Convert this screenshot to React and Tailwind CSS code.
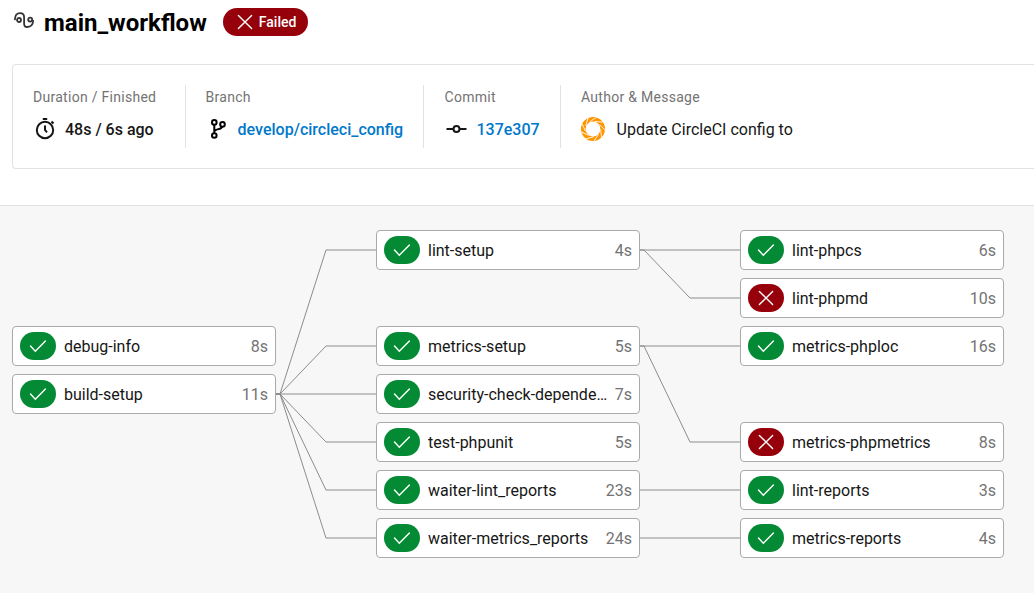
const SUCCESS = "success";
const FAILED = "failed";

const columns = [
  [
    { row: 2, name: "debug-info", time: "8s", status: SUCCESS },
    { row: 3, name: "build-setup", time: "11s", status: SUCCESS },
  ],
  [
    { row: 0, name: "lint-setup", time: "4s", status: SUCCESS },
    { row: 2, name: "metrics-setup", time: "5s", status: SUCCESS },
    { row: 3, name: "security-check-depende…", time: "7s", status: SUCCESS },
    { row: 4, name: "test-phpunit", time: "5s", status: SUCCESS },
    { row: 5, name: "waiter-lint_reports", time: "23s", status: SUCCESS },
    { row: 6, name: "waiter-metrics_reports", time: "24s", status: SUCCESS },
  ],
  [
    { row: 0, name: "lint-phpcs", time: "6s", status: SUCCESS },
    { row: 1, name: "lint-phpmd", time: "10s", status: FAILED },
    { row: 2, name: "metrics-phploc", time: "16s", status: SUCCESS },
    { row: 4, name: "metrics-phpmetrics", time: "8s", status: FAILED },
    { row: 5, name: "lint-reports", time: "3s", status: SUCCESS },
    { row: 6, name: "metrics-reports", time: "4s", status: SUCCESS },
  ],
];

const firstLinks = [[3, 0], [3, 2], [3, 3], [3, 4], [3, 5], [3, 6]];
const secondLinks = [[0, 0], [0, 1], [2, 2], [2, 4], [5, 5], [6, 6]];

const rowStart = ["row-start-1", "row-start-2", "row-start-3", "row-start-4", "row-start-5", "row-start-6", "row-start-7"];

function StatusGlyph({ status }) {
  return (
    <svg width="18" height="18" viewBox="0 0 18 18" fill="none" stroke="#fff" strokeWidth="1.4" strokeLinecap="round">
      <path d={status === SUCCESS ? "M1.5 9 6.3 14.2 16.4 4" : "M2.4 2.4 15.6 15.6M15.6 2.4 2.4 15.6"} />
    </svg>
  );
}

function Job({ job }) {
  return (
    <div className={`flex h-10 items-center rounded-[4px] border border-[#aaaaaa] bg-white px-[7px] ${rowStart[job.row]}`}>
      <span className={`flex h-7 w-9 shrink-0 items-center justify-center rounded-[14px] ${job.status === SUCCESS ? "bg-[#048a34]" : "bg-[#96000a]"}`}>
        <StatusGlyph status={job.status} />
      </span>
      <span className="ml-2 min-w-0 flex-1 truncate pt-[2px] text-[16px] leading-6 text-[#161616]">{job.name}</span>
      <span className="ml-1 pt-[2px] text-[16px] leading-6 text-[#737373]">{job.time}</span>
    </div>
  );
}

function JobColumn({ jobs }) {
  return (
    <div className="grid w-[264px] shrink-0 grid-cols-1 grid-rows-[repeat(7,40px)] gap-y-2">
      {jobs.map((job) => (
        <Job key={job.name} job={job} />
      ))}
    </div>
  );
}

function Links({ links }) {
  const y = (row) => row * 48 + 20;
  return (
    <svg className="shrink-0" width="100" height="328" fill="none" stroke="#8c8c8c" strokeWidth="1">
      {links.map(([from, to]) => (
        <path key={`${from}-${to}`} d={`M0 ${y(from)}H4L${from === to ? 4 : 50} ${y(to)}H100`} />
      ))}
    </svg>
  );
}

function Detail({ label, className, children }) {
  return (
    <div className={`flex h-[63px] shrink-0 flex-col pt-[2px] ${className}`}>
      <span className="text-[14px] leading-5 tracking-[0.28px] text-[#737373]">{label}</span>
      <div className="mt-[10px] flex h-6 shrink-0 items-center text-[16px] leading-6">{children}</div>
    </div>
  );
}

function WorkflowIcon() {
  return (
    <svg width="22" height="18" viewBox="0 0 22 18" fill="none" stroke="#343434" strokeWidth="1.8" strokeLinecap="round">
      <circle cx="6" cy="9" r="2" />
      <path d="M1.9 8.4C2.1 4.8 4 2.1 7 2.1 9.7 2.1 11.1 3.7 11.1 6.3V12.4c0 2.4 1.1 3.6 3.1 3.6 3.6 0 5.7-2.4 6-6.2" />
      <circle cx="17.2" cy="8.6" r="2" />
    </svg>
  );
}

function TimerIcon() {
  return (
    <svg width="24" height="24" viewBox="0 0 24 24" fill="none" stroke="#161616" strokeWidth="2">
      <circle cx="12" cy="13" r="8.2" />
      <path d="M9.8 2H14.2M12 8.5V13l2 2.3M18.5 4.5l2 2" />
    </svg>
  );
}

function BranchIcon() {
  return (
    <svg width="24" height="24" viewBox="0 0 24 24" fill="none" stroke="#000" strokeWidth="2">
      <circle cx="8.3" cy="5.4" r="2.3" />
      <circle cx="16.5" cy="7.4" r="2.3" />
      <circle cx="8.3" cy="18.5" r="2.3" />
      <path d="M8.3 7.7V16.2M16 9.7C15.3 12.7 10.5 11.5 8.3 14" />
    </svg>
  );
}

function CommitIcon() {
  return (
    <svg width="24" height="24" viewBox="0.5 0 24 24" fill="none" stroke="#161616" strokeWidth="2">
      <circle cx="12" cy="12" r="3" />
      <path d="M2 12H9M15 12H22" />
    </svg>
  );
}

function Avatar() {
  return (
    <svg width="24" height="24" viewBox="-12 -12 24 24">
      <circle r="9.7" fill="none" stroke="#ff9500" strokeWidth="4.6" />
      {[0, 40, 80, 120, 160, 200, 240, 280, 320].map((angle) => (
        <path key={angle} d="M-3.4-7 3.2-11.6" stroke="#fff" strokeWidth="0.9" strokeOpacity="0.9" transform={`rotate(${angle})`} />
      ))}
    </svg>
  );
}

export default function App() {
  return (
    <div className="flex h-[593px] w-full flex-col overflow-hidden bg-white font-[Roboto,sans-serif]">
      <header className="flex h-11 shrink-0 items-center pl-[13px]">
        <div className="-mt-1">
          <WorkflowIcon />
        </div>
        <h1 className="ml-[9px] pt-[2px] text-[24px] leading-8 font-bold text-black">main_workflow</h1>
        <span className="ml-4 flex h-7 items-center rounded-full bg-[#96000a] pr-3 pl-[13px] text-[14px] font-medium text-white">
          <StatusGlyph status={FAILED} />
          <span className="ml-[5px]">Failed</span>
        </span>
      </header>

      <section className="mt-5 ml-3 flex h-[105px] shrink-0 rounded-l-[4px] border border-r-0 border-[#e2e2e2] py-5 pl-5">
        <Detail label="Duration / Finished" className="w-[153px] border-r border-[#e2e2e2]">
          <TimerIcon />
          <span className="ml-2 pt-[2px] font-medium text-[#161616]">48s / 6s ago</span>
        </Detail>
        <Detail label="Branch" className="w-[238px] border-r border-[#e2e2e2] pl-[19.6px]">
          <BranchIcon />
          <a className="ml-2 pt-[2px] font-medium text-[#0078ca]">develop/circleci_config</a>
        </Detail>
        <Detail label="Commit" className="w-[137px] border-r border-[#e2e2e2] pl-[20.5px]">
          <CommitIcon />
          <a className="ml-2 pt-[2px] font-medium text-[#0078ca]">137e307</a>
        </Detail>
        <Detail label="Author &amp; Message" className="pl-5">
          <Avatar />
          <span className="ml-[11.6px] pt-[2px] text-[#161616]">Update CircleCI config to</span>
        </Detail>
      </section>

      <main className="mt-9 flex flex-1 items-start border-t border-[#e2e2e2] bg-[#f7f7f7] pt-6 pl-3">
        <JobColumn jobs={columns[0]} />
        <Links links={firstLinks} />
        <JobColumn jobs={columns[1]} />
        <Links links={secondLinks} />
        <JobColumn jobs={columns[2]} />
      </main>
    </div>
  );
}
